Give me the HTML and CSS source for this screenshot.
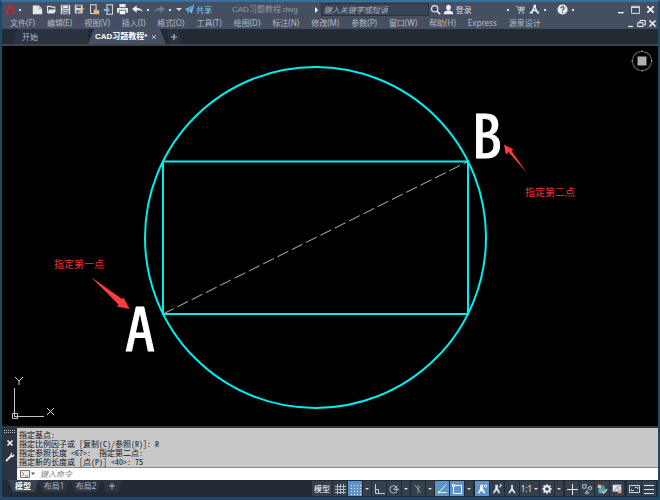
FILE: index.html
```html
<!DOCTYPE html>
<html lang="zh-CN">
<head>
<meta charset="utf-8">
<title>CAD习题教程.dwg</title>
<link rel="stylesheet" href="styles.css">
</head>
<body>
<div class="window">
  <header class="titlebar">
    <button class="logo" aria-label="应用程序菜单"><svg class="ic" viewBox="0 0 14 14"><path d="M1 13 5 1h4l4 12h-3.200L7 4.500 4.200 13z" fill="#c42a34"/><path d="M4 8h6v2.500H3.500z" fill="#8f2833"/></svg></button>
    <button class="caret" aria-label="展开"></button>
    <div class="quick">
      <button aria-label="新建"><svg class="ic" viewBox="0 0 14 14"><path d="M1 2h8l4 4v7H1z" fill="#e4e6ea"/><path d="M9 2v4h4" fill="none" stroke="#8a92a0"/></svg></button>
      <button aria-label="打开"><svg class="ic" viewBox="0 0 14 14"><path d="M2 11V3h4l1 1h4v2" fill="none" stroke="#e4e6ea" stroke-width="1.500"/><path d="M4 7h9l-2.500 5H2z" fill="#e4e6ea"/></svg></button>
      <button aria-label="保存"><svg class="ic" viewBox="0 0 14 14"><path d="M1 1h12v12H1z" fill="#d4d8df"/><path d="M3 1h8v5H3zM3 8h8v5H3z" fill="#596274"/><path d="M4 2h6v3H4zM4 9h6v1H4zM4 11h6v1H4z" fill="#e8eaee"/></svg></button>
      <button aria-label="另存为"><svg class="ic" viewBox="0 0 14 14"><path d="M1 1h10v11H1z" fill="#d4d8df"/><path d="M3 2h6v3H3zM3 8h5v3H3z" fill="#596274"/><path d="m6 10 5-6 2 2-5 5-3 1z" fill="#e6a777"/></svg></button>
      <button aria-label="从移动设备打开"><svg class="ic" viewBox="0 0 14 14"><path d="M2 1h7v11H2z" fill="none" stroke="#d9dce2" stroke-width="1.300"/><path d="M6 7h3l1 1h3v5H6z" fill="#e4b882"/></svg></button>
      <button aria-label="保存到移动设备"><svg class="ic" viewBox="0 0 14 14"><path d="M5 1h7v12H5z" fill="none" stroke="#d9dce2" stroke-width="1.300"/><path d="M1 6h4V4l4 3.500L5 11V9H1z" fill="#72b8e7"/></svg></button>
      <button aria-label="打印"><svg class="ic" viewBox="0 0 14 14"><path d="M3 0h8v4H3zM0 5h14v6H0z" fill="#e4e6ea"/><path d="M3 8h8v5.500H3z" fill="#fff" stroke="#505a6c"/></svg></button>
    </div>
    <button class="tool" aria-label="放弃"><svg class="ic" viewBox="0 0 14 14"><path d="M0 6.500 6 2v3c4 0 7 1.500 8 5.500-2-2.200-4-2.500-8-2.400V11z" fill="#eceef1"/></svg></button>
    <button class="caret" aria-label="放弃列表"></button>
    <button class="tool" aria-label="重做"><svg class="ic" viewBox="0 0 14 14"><path d="M14 6.500 8 2v3C4 5 1 6.500 0 10.500c2-2.200 4-2.500 8-2.400V11z" fill="#747d8e"/></svg></button>
    <button class="caret" aria-label="重做列表"></button>
    <button class="caret wide" aria-label="自定义快速访问工具栏"></button>
    <button class="share"><svg class="ic" viewBox="0 0 14 14"><path d="M1 7 13 1l-3 11-4-3-1 4-1-5z" fill="#6cc0ee"/><path d="m5 8 6-5-5 6" stroke="#386d99" fill="none"/></svg>共享</button>
    <span class="filename">CAD习题教程.dwg</span>
    <div class="find">
      <svg class="arrow" viewBox="0 0 4 6"><path d="M1 0 4 3 1 6z" fill="#fff"/></svg>
      <input class="search" type="text" aria-label="搜索" placeholder="键入关键字或短语">
    </div>
    <button class="tool" aria-label="查找"><svg class="ic" viewBox="0 0 14 14"><circle cx="6" cy="6" r="4" fill="none" stroke="#e4e6ea" stroke-width="1.500"/><path d="m9 9 4 4" stroke="#e4e6ea" stroke-width="2"/></svg></button>
    <button class="login"><svg class="ic" viewBox="0 0 14 14"><ellipse cx="7" cy="4.500" rx="3" ry="3.500" fill="#eef0f3"/><path d="M1 13c0-4 3-4 6-5 3 1 6 1 6 5z" fill="#eef0f3"/></svg>登录</button>
    <button class="caret push" aria-label="登录选项"></button>
    <button class="tool" aria-label="应用商店"><svg class="ic" viewBox="0 0 14 14"><path d="M1 3h2l2 6h6l1-5H4M5 5h7M5 7h6M7 4v5M9 4v5" fill="none" stroke="#c2c7d0"/><path d="M5 11h1v1H5zM10 11h1v1h-1z" stroke="#dcdfe4"/></svg></button>
    <button class="tool" aria-label="保持连接"><svg class="ic" viewBox="0 0 14 14"><path d="M3 11 7 3l4 8M4 9l3-1 3 1" fill="none" stroke="#eef0f3" stroke-width="1.600"/><path d="M6 1h3v3H6zM1 10h4v2H1zM10 10h3v2h-3z" fill="#eef0f3"/></svg></button>
    <button class="caret" aria-label="连接选项"></button>
    <button class="tool help" aria-label="帮助"><svg class="ic" viewBox="0 0 14 14"><circle cx="7" cy="7" r="6.500" fill="#e8eaed"/><path d="M5 5.500c0-3 4.500-2.500 4 0C8.800 7 7 6.800 7 8.500M7 10v1.500" fill="none" stroke="#485164" stroke-width="1.500"/></svg></button>
    <button class="caret" aria-label="帮助选项"></button>
    <div class="winctl">
      <button aria-label="最小化"><svg class="ic" viewBox="0 0 14 14"><path d="M4 11h7" stroke="#fff" stroke-width="1.800"/></svg></button>
      <button aria-label="最大化"><svg class="ic" viewBox="0 0 14 14"><path d="M2 3h10v9H2zM2 4.500h10" fill="none" stroke="#e0e3e8" stroke-width="1.200"/></svg></button>
      <button aria-label="关闭"><svg class="ic" viewBox="0 0 14 14"><path d="m3 3 8 8M11 3l-8 8" stroke="#fff" stroke-width="2"/></svg></button>
    </div>
  </header>

  <nav class="menubar" aria-label="菜单">
    <button>文件(F)</button><button>编辑(E)</button><button>视图(V)</button><button>插入(I)</button><button>格式(O)</button><button>工具(T)</button><button>绘图(D)</button><button>标注(N)</button><button>修改(M)</button><button>参数(P)</button><button>窗口(W)</button><button>帮助(H)</button><button>Express</button><button>源泉设计</button>
    <div class="docctl">
      <button aria-label="最小化图形"><svg class="ic" viewBox="0 0 12 12"><path d="M3 10h6" stroke="#fff" stroke-width="1.600"/></svg></button>
      <button aria-label="还原图形"><svg class="ic" viewBox="0 0 12 12"><path d="M4 5V2h7v6H9M1 5h7v5H1z" fill="none" stroke="#fff" stroke-width="1.300"/></svg></button>
      <button aria-label="关闭图形"><svg class="ic" viewBox="0 0 12 12"><path d="m2 2 8 8M10 2l-8 8" stroke="#fff" stroke-width="1.800"/></svg></button>
    </div>
  </nav>

  <div class="filetabs">
    <button class="filetab">开始</button>
    <div class="filetab current"><button class="name">CAD习题教程*</button><button class="shut" aria-label="关闭选项卡"><svg viewBox="0 0 6 6"><path d="m1 1 4 4M5 1 1 5" stroke="#b4bac4" stroke-width="1"/></svg></button></div>
    <button class="newtab" aria-label="新图形"><svg viewBox="0 0 6 6"><path d="M3 0v6M0 3h6" stroke="#b4bac4" stroke-width="1.200"/></svg></button>
  </div>

  <main class="canvas">
    <svg class="drawing" viewBox="2 46 656 380" role="img" aria-label="图形">
      <g fill="none" stroke="#00eef2" stroke-width="2">
        <circle cx="315.500" cy="237.500" r="170.500"/>
        <path d="M163 161.500h305V314H163z"/>
      </g>
      <path d="M163 314 468 161.500" stroke="#b9b9b9" stroke-width="1" stroke-dasharray="12 4"/>
      <g class="vertex">
        <text x="125" y="351">A</text>
        <text x="472" y="158">B</text>
      </g>
      <g class="note">
        <text x="54" y="268">指定第一点</text>
        <text x="525" y="196">指定第二点</text>
      </g>
      <g fill="#ff3b3f">
        <path d="m91 277 31 22 1.500-1.500 6 11.500-12.500-2.500 1.500-2z"/>
        <path d="m527 173-18.500-21-2.500 3-2-10.500 9.500 5-2 1.500z"/>
      </g>
    </svg>
    <svg class="ucs" viewBox="0 0 50 48" aria-hidden="true">
      <path d="M7.500 12v29M8 40.500h29" stroke="#c6c6c6" fill="none"/>
      <path d="M5.500 37.500h5v5h-5z" stroke="#c6c6c6" fill="none"/>
      <path d="m8 1 4 4 4-4M12 5v4M40 32l7 7M47 32l-7 7" stroke="#d8d8d8" fill="none"/>
    </svg>
    <svg class="compass" viewBox="0 0 24 24" aria-hidden="true">
      <circle cx="12" cy="12" r="9.500" fill="none" stroke="#4c4c4c" stroke-width="1.500" stroke-dasharray="11.900 3" stroke-dashoffset="-1.500"/>
      <path d="m12 1 1.500 2h-3zM12 23l1.500-2h-3zM1 12l2 1.500v-3zM23 12l-2 1.500v-3z" fill="#999"/>
      <path d="M7.500 7.500h9v9h-9z" fill="#aeaeae"/>
    </svg>
  </main>

  <section class="command" aria-label="命令行">
    <div class="grip">
      <svg class="dots" viewBox="0 0 11 4"><path d="M0 .5h11M0 2.500h11" stroke="#b7bcc5" stroke-dasharray="1 1"/></svg>
      <button aria-label="关闭命令行"><svg class="ic" viewBox="0 0 10 10"><path d="m2.500 2.500 5 5M7.500 2.500l-5 5" stroke="#fff" stroke-width="1.500"/></svg></button>
      <button aria-label="自定义"><svg class="ic" viewBox="0 0 10 10"><path d="m1 9 5-5" stroke="#eceef1" stroke-width="1.800"/><path d="M8 .8 6.500 2.300l1.200 1.200L9.200 2C10 4 8.500 5.800 6.300 5.200 4 4.500 5.200.5 8 .8z" fill="#eceef1"/></svg></button>
    </div>
    <div class="console">
      <pre class="history">指定基点:
指定比例因子或 [复制(C)/参照(R)]: R
指定参照长度 &lt;67&gt;:  指定第二点:
指定新的长度或 [点(P)] &lt;40&gt;: 75</pre>
      <div class="prompt">
        <button aria-label="最近使用的命令"><svg viewBox="0 0 16 8"><path d="M.5.500h9v7h-9z" fill="#eee" stroke="#777"/><path d="m2 2 2 2-2 2M5 6h3" fill="none" stroke="#777" stroke-width=".8"/><path d="M11 2.500h4L13 5z" fill="#555"/></svg></button>
        <input type="text" aria-label="命令" placeholder="键入命令">
      </div>
    </div>
  </section>

  <footer class="status">
    <div class="layouts">
      <button class="on">模型</button><button>布局1</button><button>布局2</button><button class="add" aria-label="新建布局"><svg viewBox="0 0 6 6"><path d="M3 0v6M0 3h6" stroke="#b4bac4"/></svg></button>
    </div>
    <div class="toggles">
      <button class="label">模型</button>
      <button aria-label="栅格"><svg class="ic" viewBox="0 0 12 12"><path d="M3.500 1v10M6.500 1v10M9.500 1v10M1 3.500h11M1 6.500h11M1 9.500h11" stroke="#b4bac4"/></svg></button>
      <button class="on" aria-label="捕捉"><svg class="ic" viewBox="0 0 12 12"><path d="M2 2.500h10M2 5.500h10M2 8.500h10M2 11.500h10" stroke="#fff" stroke-dasharray="1 2"/></svg></button>
      <button class="drop" aria-label="捕捉设置"></button>
      <button aria-label="正交"><svg class="ic" viewBox="0 0 12 12"><path d="M2.500 1v9.500H12M2.500 6.500h3v4" fill="none" stroke="#c6cbd3"/></svg></button>
      <button aria-label="极轴追踪"><svg class="ic" viewBox="0 0 14 14"><circle cx="6.500" cy="7.500" r="4.300" fill="none" stroke="#c6cbd3"/><path d="M6.500 7.500H13M6.500 7.500 11 3" stroke="#c6cbd3"/></svg></button>
      <button class="drop" aria-label="极轴设置"></button>
      <button aria-label="等轴测"><svg class="ic" viewBox="0 0 14 14"><path d="m3 2 4 5 3 4" stroke="#9ba3b0" fill="none"/><path d="M7 2v10" stroke="#9ba3b0"/><path d="m7 7 3-3" stroke="#6fa36a"/></svg></button>
      <button class="drop" aria-label="等轴测设置"></button>
      <button class="on" aria-label="对象捕捉追踪"><svg class="ic" viewBox="0 0 14 14"><path d="M12 2 3 11h10" fill="none" stroke="#fff"/><path d="M2 10h2v2H2z" fill="#fff"/></svg></button>
      <button class="on" aria-label="对象捕捉"><svg class="ic" viewBox="0 0 12 12"><path d="M2.500 2.500h8v8h-8z" fill="none" stroke="#fff"/><path d="M1.500 1.500h2v2h-2z" fill="#5f91cb" stroke="#fff"/></svg></button>
      <button class="drop" aria-label="捕捉模式"></button>
      <button class="on gap" aria-label="注释可见性"><svg class="ic" viewBox="0 0 14 14"><path d="M5 2h3v4l3 6H9L6.500 8.500 4 12H2l3-6z" fill="#fff"/><circle cx="11" cy="3.500" r="1.500" fill="none" stroke="#fff"/></svg></button>
      <button aria-label="自动缩放"><svg class="ic" viewBox="0 0 14 14"><path d="M5 2h3v4l3 6H9L6.500 8.500 4 12H2l3-6z" fill="#dfe2e7"/><path d="m9 5 4-3M11 1v4" stroke="#dfe2e7"/></svg></button>
      <button aria-label="注释比例"><svg class="ic" viewBox="0 0 14 14"><path d="M6 2h2v4l3.500 6h-2L7 9l-2.500 3h-2L6 6z" fill="#dfe2e7"/></svg></button>
      <button class="scale">1:1</button>
      <button aria-label="切换工作空间"><svg class="ic" viewBox="0 0 14 14"><circle cx="7" cy="7" r="3.200" fill="none" stroke="#eef0f3" stroke-width="2.200"/><path d="M7 1.500v2M7 10.500v2M1.500 7h2M10.500 7h2M3 3l1.500 1.500M9.500 9.500 11 11M11 3 9.500 4.500M4.500 9.500 3 11" stroke="#eef0f3" stroke-width="1.800"/></svg></button>
      <button class="drop" aria-label="工作空间"></button>
      <button class="gap" aria-label="注释监视器"><svg class="ic" viewBox="0 0 12 12"><path d="M6.500 1v11M1 6.500h11" stroke="#e4e6ea"/></svg></button>
      <button aria-label="隔离对象"><svg class="ic" viewBox="0 0 14 14"><path d="M2 2h4v4H2zM7 9l2 3H5z" fill="none" stroke="#d0d4db"/><circle cx="10.500" cy="6" r="2" fill="none" stroke="#d0d4db"/></svg></button>
      <button aria-label="硬件加速"><svg class="ic" viewBox="0 0 14 14"><path d="M2 2h4v4H2z" fill="#e0c65a"/><path d="M6 3h4v4H6z" fill="#4b94d3"/><path d="M3 6h4v6H3z" fill="#57a3de"/><path d="M7 7h5v4H7z" fill="#64a65c"/><path d="m7 10 2 2 4-5" fill="none" stroke="#d9e9f5" stroke-width="1.300"/></svg></button>
      <button aria-label="性能"><svg class="ic" viewBox="0 0 14 14"><path d="M2 2h10v8H2z" fill="#e4e6ea"/><path d="m4 9 3-4 3 3M8 4h3" fill="none" stroke="#6f7888"/><path d="M8 8h4v4H8z" fill="#e1a58c"/></svg></button>
      <button class="gap3" aria-label="全屏显示"><svg class="ic" viewBox="0 0 12 12"><path d="M1.500 2.500h10v7h-10z" fill="none" stroke="#d0d4db"/><path d="M7 4.500h2.500V6M3.500 6v1.500H6" fill="none" stroke="#d0d4db"/></svg></button>
      <button aria-label="自定义状态栏"><svg class="ic" viewBox="0 0 12 12"><path d="M1 2.500h10M1 6.500h10M1 10.500h10" stroke="#e4e6ea"/></svg></button>
    </div>
  </footer>
</div>
</body>
</html>
```
FILE: styles.css
```css
* { box-sizing: border-box; }
html, body { height: 100%; margin: 0; }
body {
  background: #000;
  color: #b5bac4;
  font: 8px/12px "Noto Sans", "Noto Sans CJK SC", sans-serif;
}
button, input { font: inherit; color: inherit; border: 0; padding: 0; margin: 0; background: none; border-radius: 0; }
button { display: flex; align-items: center; justify-content: center; flex: none; white-space: nowrap; }
svg { display: block; flex: none; }

.window {
  display: flex;
  flex-direction: column;
  min-height: 100vh;
  border: solid #1f4a67;
  border-width: 2px 2px 3px;
  border-top-color: #37719b;
}

/* title bar */
.titlebar { display: flex; align-items: center; height: 15px; background: #454f61; padding-left: 2px; }
.titlebar .ic { width: 11px; height: 11px; }
.logo { width: 12px; }
.caret { width: 8px; height: 12px; }
.caret::before { content: ""; width: 2px; height: 2px; background: #d9dce2; }
.caret.wide { width: 10px; }
.caret.wide::before, .drop::before, .scale::after {
  content: "";
  width: 0;
  height: 0;
  background: none;
  border: solid transparent;
  border-width: 2px 2px 0;
  border-top-color: #d9dce2;
}
.caret.wide::before { border-width: 3px 3px 0; }
.quick { display: flex; justify-content: space-between; width: 100px; margin-left: 6px; }
.quick button, .tool { width: 14px; }
.share { color: #7fc4ec; gap: 1px; }
.filename { margin-left: 20px; color: #929aa8; white-space: nowrap; font-family: "Liberation Sans", "Noto Sans CJK SC", sans-serif; }
.find { display: flex; align-items: center; flex: 0 1 115px; gap: 3px; margin-left: 16px; min-width: 60px; }
.arrow { width: 4px; height: 6px; }
.search { flex: 1; min-width: 0; height: 13px; padding: 0 2px; background: #3b4455; border: 1px solid #2b3341; }
.search::placeholder, .prompt input::placeholder { color: #a9afba; font-style: italic; opacity: 1; }
.login { gap: 2px; color: #d5d9e0; }
.push { margin-left: auto; }
.caret.push { width: 10px; }
.help { margin-left: 6px; }
.winctl { display: flex; margin-left: 36px; }
.winctl button { width: 15px; }

/* menus */
.menubar { display: flex; align-items: center; gap: 12px; height: 12px; padding-left: 8px; background: #454f61; }
.docctl { display: flex; margin-left: auto; }
.docctl button { width: 11px; }
.docctl .ic { width: 9px; height: 9px; }

/* file tabs */
.filetabs { display: flex; height: 17px; background: #222a34; border-bottom: 2px solid #41454b; padding-left: 10px; }
.filetab { justify-content: flex-start; width: 76px; padding-left: 10px; background: #2b3340; clip-path: polygon(6px 0, 100% 0, 100% 100%, 0 100%); }
.filetab.current { display: flex; align-items: center; gap: 4px; width: 78px; padding-left: 7px; background: #465063; color: #fff; font-weight: bold; font-family: "Liberation Sans", "Noto Sans CJK SC", sans-serif; clip-path: polygon(6px 0, 72px 0, 100% 100%, 0 100%); }
.shut svg, .newtab svg, .layouts svg { width: 6px; height: 6px; }
.newtab { width: 16px; background: #2b3340; clip-path: polygon(0 0, 12px 0, 100% 100%, 4px 100%); }

/* drawing area */
.canvas { position: relative; flex: 1; min-height: 0; background: #000; }
.drawing { width: 100%; }
.vertex { font: 60px "Noto Sans Mono CJK SC", "Liberation Sans Narrow", sans-serif; fill: #fff; stroke: #fff; stroke-width: 1px; }
.note { font: 10px "Noto Sans CJK SC", sans-serif; fill: #ee353b; }
.ucs { position: absolute; left: 5px; bottom: 2px; width: 50px; height: 48px; }
.compass { position: absolute; right: 4px; top: 3px; width: 24px; height: 24px; }

/* command line */
.command { display: flex; border-top: 2px solid #343537; }
.grip { display: flex; flex-direction: column; align-items: center; gap: 4px; width: 15px; padding-top: 2px; background: #2c3442; }
.grip .dots { width: 11px; height: 4px; }
.grip .ic { width: 10px; height: 10px; }
.console { flex: 1; min-width: 0; }
.history { margin: 0; padding: 2px 2px 1px; background: #c8c8c8; color: #151515; font: 8px/9px "Noto Sans Mono CJK SC", "Noto Sans CJK SC", monospace; }
.prompt { display: flex; align-items: center; gap: 4px; height: 13px; padding-left: 3px; background: #fff; border-top: 1px solid #8a8a8a; }
.prompt svg { width: 16px; height: 8px; }
.prompt input { flex: 1; min-width: 0; height: 12px; color: #222; }
.prompt input::placeholder { color: #888; }

/* status bar */
.status { display: flex; justify-content: space-between; height: 17px; background: #222a34; }
.layouts { display: flex; height: 12px; padding-left: 6px; }
.layouts button { width: 32px; background: #2d3543; clip-path: polygon(0 0, 100% 0, 27px 100%, 5px 100%); }
.layouts .on { width: 30px; background: #3b4455; color: #fff; font-weight: bold; }
.layouts .add { width: 20px; clip-path: polygon(0 0, 100% 0, 16px 100%, 4px 100%); }
.toggles { display: flex; gap: 1px; padding: 1px 2px 1px 0; }
.toggles button { width: 14px; background: #363f4e; }
.toggles .ic { width: 12px; height: 12px; }
.toggles .on { background: #5f91cb; }
.toggles .label { width: 20px; color: #fff; }
.toggles .drop { width: 8px; }
.toggles .scale { width: 19px; gap: 2px; color: #e4e6ea; }
.toggles .gap { margin-left: 1px; }
.toggles .gap3 { margin-left: 2px; }
```
